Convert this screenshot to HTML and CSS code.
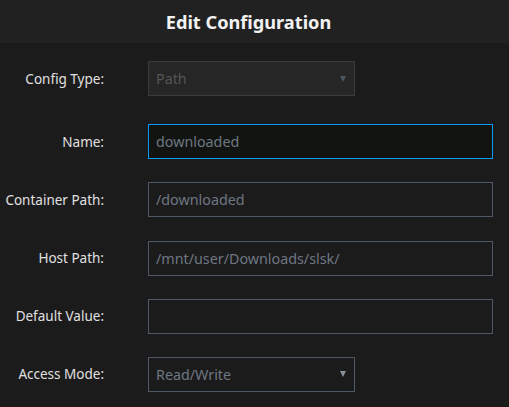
FILE: index.html
```html
<!DOCTYPE html>
<html lang="en">
<head>
    <meta charset="UTF-8">
    <meta name="viewport" content="width=device-width, initial-scale=1.0">
    <title>Edit Configuration</title>
    <link rel="stylesheet" href="styles.css">
</head>
<body>

    <div class="header">
        <h2>Edit Configuration</h2>
    </div>

    <form class="form">
        <div class="row first">
            <label>Config Type:</label>
            <div class="select disabled">
                <span>Path</span>
                <span class="arrow"></span>
            </div>
        </div>

        <div class="row">
            <label>Name:</label>
            <div class="field focus">downloaded</div>
        </div>

        <div class="row">
            <label>Container Path:</label>
            <div class="field">/downloaded</div>
        </div>

        <div class="row">
            <label>Host Path:</label>
            <div class="field">/mnt/user/Downloads/slsk/</div>
        </div>

        <div class="row">
            <label>Default Value:</label>
            <div class="field"></div>
        </div>

        <div class="row">
            <label>Access Mode:</label>
            <div class="select">
                <span>Read/Write</span>
                <span class="arrow"></span>
            </div>
        </div>
    </form>

</body>
</html>
```

FILE: styles.css
```css
* {
    margin: 0;
    padding: 0;
    box-sizing: border-box;
}

body {
    width: 509px;
    height: 407px;
    overflow: hidden;
    background-color: #1c1b1c;
    font-family: "Noto Sans", "Open Sans", sans-serif;
    font-size: 13.5px;
}

.header {
    height: 43px;
    background-color: #212121;
    display: flex;
    justify-content: center;
    align-items: center;
    padding-right: 12px;
}

.header h2 {
    color: #f2f2f2;
    font-size: 18.2px;
    font-weight: 700;
}

.form {
    padding-top: 18px;
    display: flex;
    flex-direction: column;
    gap: 23.2px;
}

.row {
    display: grid;
    grid-template-columns: 104px 1fr;
    column-gap: 44px;
    align-items: center;
    height: 35px;
}

.row.first {
    margin-bottom: 5px;
}

.row label {
    text-align: right;
    color: #e0e0e0;
    white-space: nowrap;
}

.field,
.select {
    height: 35px;
    width: 345px;
    border: 1px solid #4f5966;
    padding: 0 7px;
    display: flex;
    align-items: center;
    color: #6e7782;
    font-size: 14.3px;
}

.field.focus {
    border-color: #0a9cf5;
    background-color: #121412;
}

.select {
    width: 207px;
    justify-content: space-between;
}

.select.disabled {
    background-color: #262626;
    border-color: #3b3b3b;
    color: #555555;
}

/* little dropdown triangle */
.select .arrow {
    width: 0;
    height: 0;
    border-left: 3px solid transparent;
    border-right: 3px solid transparent;
    border-top: 6px solid #8a939d;
    margin-right: 1px;
}

.select.disabled .arrow {
    border-top-color: #4c5561;
}
```
